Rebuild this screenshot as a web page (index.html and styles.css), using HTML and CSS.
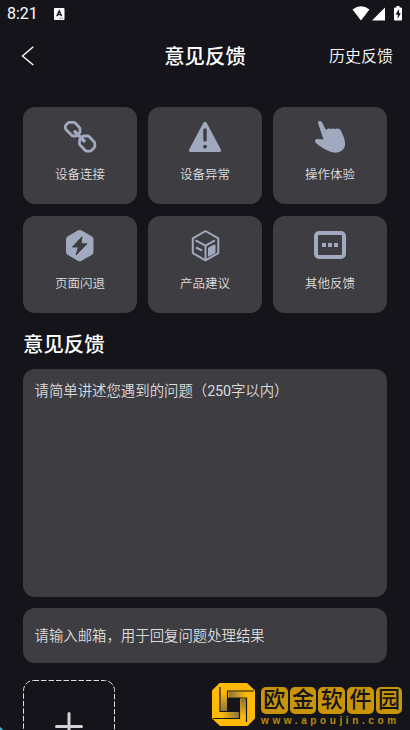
FILE: index.html
```html
<!DOCTYPE html>
<html lang="zh-CN">
<head>
<meta charset="utf-8">
<title>意见反馈</title>
<link rel="stylesheet" href="styles.css">
</head>
<body>
<div class="app">
  <div class="status">
    <span class="time">8:21</span>
    <svg class="badge" width="11" height="12" viewBox="0 0 11 12"><rect width="10.5" height="12" rx="1" fill="#fff"/><path d="M2.8 8.3 5.2 3 7.7 8.3M3.8 6.6h3" fill="none" stroke="#15141a" stroke-width="1.4"/><path d="M5.5 10.3h1M7.7 10.3h1" stroke="#15141a" stroke-width="1"/></svg>
    <svg class="signals" width="52" height="16" viewBox="0 0 52 16"><path d="M.5 3.5Q9 -2.8 17.5 3.5L9 14.5z" fill="#fff"/><path d="M33 1.5v13H20z" fill="#fff"/><path d="M44.5 0h3v1.5H49q1 0 1 1v11q0 1-1 1h-6q-1 0-1-1v-11q0-1 1-1h1.500z" fill="#fff"/><path d="M47 3 43.500 8.500h2.200V13L48.800 7H47z" fill="#15141a"/></svg>
  </div>
  <header class="nav">
    <svg class="back" width="14" height="20" viewBox="0 0 14 20"><path d="M12.300.7 1.500 10 12.300 19" fill="none" stroke="#fff" stroke-width="1.400"/></svg>
    <h1>意见反馈</h1>
    <span class="history">历史反馈</span>
  </header>
  <main>
    <section class="grid">
      <div class="card">
        <svg width="36" height="36" viewBox="0 0 36 36" fill="none" stroke="#a0a9be" stroke-width="2.800" stroke-linejoin="round" stroke-linecap="round"><path d="M7.500 3.300h4q1 0 1.700.7l4 4.200q.8.800.8 1.800v2.500q0 1-.7 1.700l-1.600 2q-.7.800-1.700.8h-2.500q-1 0-1.800-.8L4.200 10.700q-.8-.8-.8-1.800V7.500q0-1 .8-1.700l1.600-1.700q.7-.8 1.700-.8z"/><path d="M22 17h3.500q1 0 1.800.8l4.700 5q.8.800.8 1.800v2.500q0 1-.7 1.700l-2.500 2.500q-.7.800-1.700.8h-3q-1 0-1.800-.8l-4.800-5q-.8-.8-.8-1.800V22q0-1 .7-1.700l2-2.500q.8-.8 1.800-.8z"/><path d="m13 12.800 9 9" stroke-width="3.600"/></svg>
        <span>设备连接</span>
      </div>
      <div class="card">
        <svg width="36" height="36" viewBox="0 0 36 36"><path d="M16.200 4q1.800-2.500 3.600 0l14 26.500q1 2.500-1.500 2.500H3.700q-2.500 0-1.500-2.500z" fill="#a0a9be"/><path d="M18 11v10" stroke="#3e3d42" stroke-width="3.400" stroke-linecap="round"/><circle cx="18" cy="27.700" r="1.900" fill="#3e3d42"/></svg>
        <span>设备异常</span>
      </div>
      <div class="card">
        <svg width="36" height="36" viewBox="0 0 36 36"><path d="M6 4C5.700 1.800 8.300 1 10 3.300L14 11C16 9.500 17.500 9.300 18.700 10 20 9.300 22 9.300 23.500 10 26 9 28 9.500 29.300 12.500 31.500 17 33.500 21.500 33 26 32.500 31.500 26.500 34.300 21.500 33.600 16 32.500 9.500 28.500 4.500 24.500 2 22.500 3 20 5.500 20L11.500 20.500Z" fill="#a0a9be"/></svg>
        <span>操作体验</span>
      </div>
      <div class="card">
        <svg width="36" height="36" viewBox="0 0 36 36"><path d="M15.700 2.600q2-1.200 4 0L30 8.600q1.500 1 1.500 2.500v13q0 1.700-1.500 2.600l-10.300 6q-2 1.200-4 0L5.500 26.700Q4 25.800 4 24.100v-13q0-1.500 1.500-2.500z" fill="#a0a9be"/><path d="M20 8.800 10.500 19h6L14 27 25 15.800h-6z" fill="#3e3d42" stroke="#3e3d42" stroke-linejoin="round"/></svg>
        <span>页面闪退</span>
      </div>
      <div class="card">
        <svg width="36" height="36" viewBox="0 0 36 36" fill="none" stroke="#a0a9be" stroke-width="2" stroke-linejoin="round"><path d="m18.500 3 12.800 7.300v14.800L18.500 32.300 5.800 25.100V10.300z"/><path d="m8.500 12.300 10 5.300 9.500-5.300M18.500 17.600v14M9 19.500l6 3"/><path d="m22 20.500 5.500-3v6.800L22 27.500z" fill="#a0a9be"/></svg>
        <span>产品建议</span>
      </div>
      <div class="card">
        <svg width="36" height="36" viewBox="0 0 36 36"><rect x="4" y="5" width="28" height="24" rx="3" fill="none" stroke="#a0a9be" stroke-width="4"/><path d="M10 15h4v4h-4zm6 0h4v4h-4zm6 0h4v4h-4z" fill="#a0a9be"/></svg>
        <span>其他反馈</span>
      </div>
    </section>
    <h2>意见反馈</h2>
    <div class="field details">请简单讲述您遇到的问题（<span class="limit">250</span>字以内）</div>
    <div class="field email">请输入邮箱，用于回复问题处理结果</div>
    <svg class="upload" width="92" height="92" viewBox="0 0 92 92" fill="none"><rect x=".5" y=".5" width="91" height="91" rx="10" stroke="#dedee0" stroke-dasharray="5.500 2"/><path d="M46 33.500v26M33.500 46.500h25" stroke="#d2d2d4" stroke-width="3" stroke-linecap="round"/></svg>
  </main>
  <svg class="corner" width="4" height="4" viewBox="0 0 4 4"><path d="M0 1q2 1 3 3H0z" fill="#48aabf"/></svg>
  <div class="watermark">
    <svg width="43" height="43" viewBox="0 0 43 43">
      <defs>
        <linearGradient id="right"><stop stop-color="#8a7544"/><stop offset="1" stop-color="#ffba08"/></linearGradient>
        <linearGradient id="left" x1="1" x2="0"><stop stop-color="#8a7544"/><stop offset="1" stop-color="#ffba08"/></linearGradient>
        <linearGradient id="down" x1="0" x2="0" y1="0" y2="1"><stop stop-color="#8a7544"/><stop offset="1" stop-color="#ffba08"/></linearGradient>
        <linearGradient id="up" x1="0" x2="0" y1="1" y2="0"><stop stop-color="#8a7544"/><stop offset="1" stop-color="#ffba08"/></linearGradient>
      </defs>
      <path d="M7.500 0H35l8 7.500v28L35.500 43H8L0 35.500v-28z" fill="#ffba08"/>
      <path d="M15.500 15h12v14h-12z" fill="#15141a"/>
      <path d="M17 8.700h17v6H17z" fill="url(#right)"/>
      <path d="M9 29h18v6H9z" fill="url(#left)"/>
      <path d="M8.700 9h6v19h-6z" fill="url(#up)"/>
      <path d="M28.500 16h5.500v18h-5.500z" fill="url(#down)"/>
      <path d="M8 4v24.500h19.500M42 8H15.500v20.500M1 35.500h26.500V15M34.500 39V15H16" fill="none" stroke="#15141a" stroke-width="1.200"/>
    </svg>
    <div class="brand">
      <div class="tiles"><b>欧</b><b>金</b><b>软</b><b>件</b><b>园</b></div>
      <div class="url">www.apoujin.com</div>
    </div>
  </div>
</div>
</body>
</html>
```
FILE: styles.css
```css
* { box-sizing: border-box; }
body { margin: 0; background: #15141a; color: #fff; font-family: Roboto, "Noto Sans CJK SC", sans-serif; }
.app { position: relative; height: 730px; overflow: hidden; }
.status { display: flex; align-items: center; height: 28px; padding: 0 6px 0 7px; }
.time { width: 47px; font-size: 16px; line-height: 30px; }
.signals { margin-left: auto; }
.nav { display: grid; grid-template-columns: 1fr auto 1fr; align-items: center; height: 56px; padding: 0 17px 0 21px; }
h1, h2 { margin: 0; font-size: 20.4px; font-weight: 500; line-height: 30px; }
h1 { padding: 2px 4px 0 0; }
.history { justify-self: end; padding-top: 2px; font-size: 16px; font-weight: 350; line-height: 24px; }
main { padding: 23px 23px 0; }
.grid { display: grid; grid-template-columns: repeat(3, 114px); gap: 11.5px 11px; }
.card { display: flex; flex-direction: column; align-items: center; height: 97px; padding-top: 12px; border-radius: 12px; background: #3e3d42; }
.card span { margin-top: 10px; color: #dededf; font-size: 12.5px; font-weight: 350; line-height: 20px; }
h2 { margin-top: 17px; height: 39.5px; }
.field { border-radius: 12px; background: #3e3d42; color: #dcdcdd; font-size: 14.4px; font-weight: 350; line-height: 22px; padding: 12px 11.5px; }
.limit { font-weight: 400; letter-spacing: -.2px; }
.details { height: 228px; }
.email { height: 55px; margin-top: 11px; padding-top: 18px; }
.upload { display: block; margin-top: 17px; }
.corner { position: absolute; left: 0; bottom: 0; }
.watermark { position: absolute; left: 212px; top: 683px; display: flex; gap: 6px; }
.brand { padding-top: 4px; }
.tiles { display: flex; gap: 2px; }
.tiles b { width: 26.700px; height: 27px; border-radius: 5px; background: #c99508; color: #15141a; font-size: 22px; font-weight: 500; line-height: 26px; text-align: center; }
.url { margin-top: 1px; color: #ba8b0e; font: bold 10px/11px "Liberation Sans", sans-serif; letter-spacing: 3.600px; white-space: nowrap; }
```
